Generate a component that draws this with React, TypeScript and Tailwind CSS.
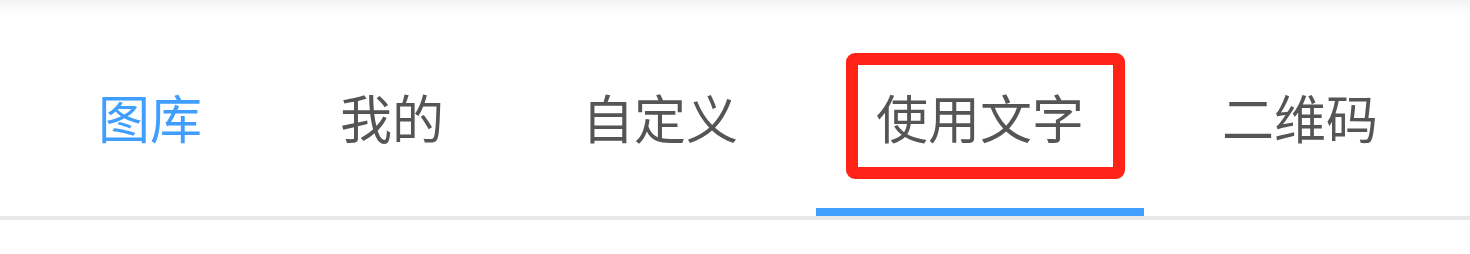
import React from "react";

const tabs = ["图库", "我的", "自定义", "使用文字", "二维码"];

export default function App() {
  const active = 0;
  const underline = 3;
  return (
    <div
      className="relative w-[1470px] h-[254px] bg-white overflow-hidden"
      style={{ fontFamily: '"Noto Sans CJK SC", "Noto Sans", sans-serif' }}
    >
      <div className="absolute left-0 right-0 top-0 h-[14px] bg-gradient-to-b from-[#f3f3f3] to-white" />
      <div className="relative flex h-[220px] border-b-4 border-[#e8e8e8] pl-[38px] gap-[18px]">
        {tabs.map((t, i) => (
          <div
            key={t}
            className={
              "relative flex items-center pt-[18px] px-[60px] text-[52px] leading-none " +
              (i === active ? "text-[#409eff]" : "text-[#555555]")
            }
          >
            <span>{t}</span>
            {i === underline && (
              <>
                <div className="absolute left-0 right-0 bottom-0 h-[8px] bg-[#409eff]" />
                <div className="absolute left-[30px] top-[53px] w-[279px] h-[126px] border-[12px] border-[#ff2317] rounded-[9px]" />
              </>
            )}
          </div>
        ))}
      </div>
    </div>
  );
}
